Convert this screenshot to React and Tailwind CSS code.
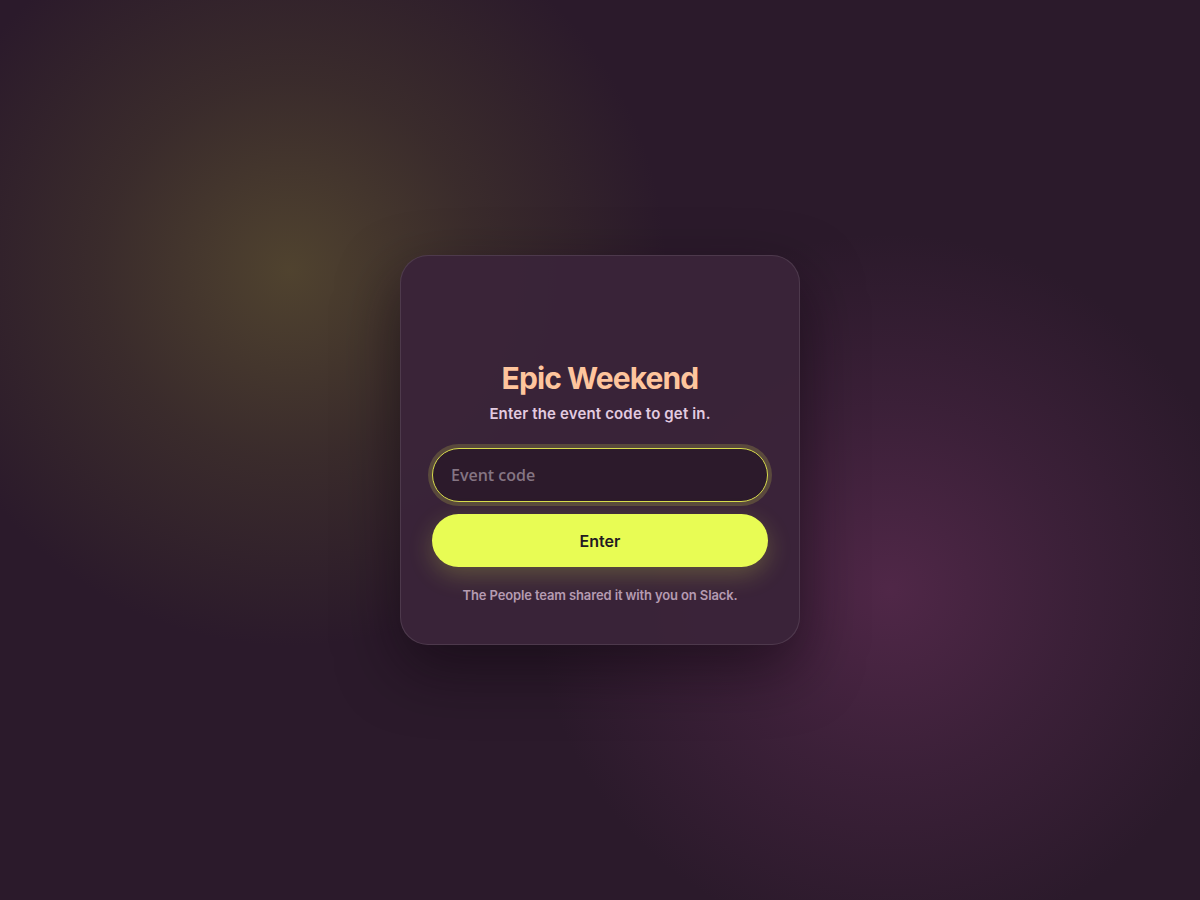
export default function App() {
  return (
    <div
      className="relative min-h-[900px] w-full overflow-hidden bg-[#2b1a2b] flex items-center justify-center"
      style={{ fontFamily: '"Inter", "Noto Sans", sans-serif' }}
    >
      <div className="pointer-events-none absolute left-[290px] top-[270px] h-[760px] w-[760px] -translate-x-1/2 -translate-y-1/2 rounded-full bg-[radial-gradient(circle,rgba(110,100,50,0.55)_0%,rgba(90,80,45,0.32)_35%,rgba(43,26,43,0)_70%)]" />
      <div className="pointer-events-none absolute left-[890px] top-[590px] h-[720px] w-[720px] -translate-x-1/2 -translate-y-1/2 rounded-full bg-[radial-gradient(circle,rgba(110,50,95,0.55)_0%,rgba(95,45,85,0.32)_35%,rgba(43,26,43,0)_70%)]" />

      <div className="relative w-[400px] h-[390px] rounded-[28px] border border-white/10 bg-[#3a2439]/95 px-[31px] pt-[104px] shadow-[0_24px_60px_rgba(15,5,15,0.55)] flex flex-col items-center">
        <h1 className="text-[30px] leading-[36px] font-bold tracking-[-0.03em] text-[#fec59d]">
          Epic Weekend
        </h1>
        <p className="mt-[8px] text-[15px] leading-[20px] font-semibold text-[#e3cbe0] tracking-[0.01em]">
          Enter the event code to get in.
        </p>
        <input
          placeholder="Event code"
          className="mt-[24px] h-[54px] w-full rounded-full border border-[#d8dc4c] bg-[#2c1a2b] px-[18px] text-[16px] font-semibold text-white placeholder:text-[#857583] outline-none shadow-[0_0_0_4px_rgba(220,225,80,0.2)]"
          style={{ fontFamily: '"Open Sans", "Noto Sans", sans-serif' }}
        />
        <button className="mt-[12px] h-[53px] w-full rounded-full bg-[#e8fc54] text-[16px] font-semibold text-[#231a22] shadow-[0_8px_24px_rgba(232,252,84,0.22)]">
          Enter
        </button>
        <p className="mt-[19px] text-[13px] leading-[18px] font-semibold tracking-[-0.01em] text-[#b59bb1]">
          The People team shared it with you on Slack.
        </p>
      </div>
    </div>
  );
}
